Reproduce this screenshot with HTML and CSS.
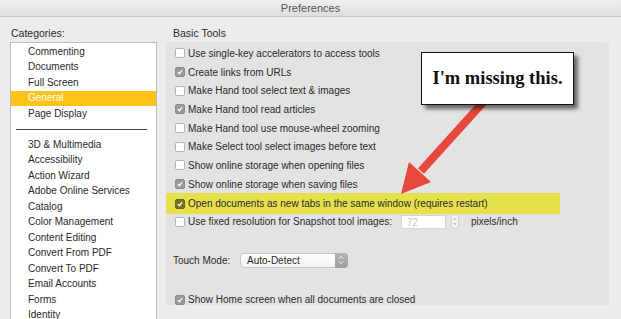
FILE: index.html
```html
<!DOCTYPE html>
<html lang="en">

<head>
    <meta charset="UTF-8">
    <title>Preferences</title>
    <link rel="stylesheet" href="styles.css">
</head>

<body>
    <div class="titlebar">Preferences</div>
    <div class="main">
        <div class="sidebar">
            <div class="heading">Categories:</div>
            <ul class="list">
                <li>Commenting</li>
                <li>Documents</li>
                <li>Full Screen</li>
                <li class="selected">General</li>
                <li>Page Display</li>
                <li class="sep"></li>
                <li>3D &amp; Multimedia</li>
                <li>Accessibility</li>
                <li>Action Wizard</li>
                <li>Adobe Online Services</li>
                <li>Catalog</li>
                <li>Color Management</li>
                <li>Content Editing</li>
                <li>Convert From PDF</li>
                <li>Convert To PDF</li>
                <li>Email Accounts</li>
                <li>Forms</li>
                <li>Identity</li>
            </ul>
        </div>
        <div class="content">
            <div class="heading basic">Basic Tools</div>
            <div class="panel">
                <div class="row"><span class="cb"></span>Use single-key accelerators to access tools</div>
                <div class="row"><span class="cb on"><svg viewBox="0 0 10 10"><path d="M2.4 5.2 L4.3 7.2 L7.6 2.6"/></svg></span>Create links from URLs</div>
                <div class="row"><span class="cb"></span>Make Hand tool select text &amp; images</div>
                <div class="row"><span class="cb on"><svg viewBox="0 0 10 10"><path d="M2.4 5.2 L4.3 7.2 L7.6 2.6"/></svg></span>Make Hand tool read articles</div>
                <div class="row"><span class="cb"></span>Make Hand tool use mouse-wheel zooming</div>
                <div class="row"><span class="cb"></span>Make Select tool select images before text</div>
                <div class="row"><span class="cb"></span>Show online storage when opening files</div>
                <div class="row"><span class="cb on"><svg viewBox="0 0 10 10"><path d="M2.4 5.2 L4.3 7.2 L7.6 2.6"/></svg></span>Show online storage when saving files</div>
                <div class="row marked"><span class="cb on"><svg viewBox="0 0 10 10"><path d="M2.4 5.2 L4.3 7.2 L7.6 2.6"/></svg></span>Open documents as new tabs in the same window (requires restart)</div>
                <div class="row"><span class="cb"></span><span class="fixed-label">Use fixed resolution for Snapshot tool images:</span><span class="num">72</span><span class="stepper"><svg viewBox="0 0 8 15"><path d="M2.2 5.5 L4 3.5 L5.8 5.5 M2.2 9.5 L4 11.5 L5.8 9.5"/></svg></span><span class="unit">pixels/inch</span></div>
                <div class="row touch"><span class="touch-label">Touch Mode:</span><span class="popup">Auto-Detect<span class="popbtn"><svg viewBox="0 0 12 14"><path d="M3.8 5.6 L6 3.4 L8.2 5.6 M3.8 8.4 L6 10.6 L8.2 8.4"/></svg></span></span></div>
                <div class="row home"><span class="cb on"><svg viewBox="0 0 10 10"><path d="M2.4 5.2 L4.3 7.2 L7.6 2.6"/></svg></span>Show Home screen when all documents are closed</div>
            </div>
        </div>
    </div>

    <!-- annotation -->
    <svg class="arrow" width="621" height="319" viewBox="0 0 621 319">
        <line x1="487" y1="98" x2="421" y2="171" />
        <polygon points="401,194 431,182 409,162" />
    </svg>
    <div class="callout">I'm missing this.</div>
</body>

</html>
```

FILE: styles.css
```css
body {
    margin: 0;
    width: 621px;
    height: 319px;
    overflow: hidden;
    position: relative;
    background-color: #ececec;
    font-family: 'Liberation Sans', Arial, sans-serif;
    font-size: 10px;
    color: #2a2a2a;
}

.titlebar {
    height: 16px;
    line-height: 16px;
    text-align: center;
    font-size: 11px;
    color: #555;
    background: linear-gradient(#efefef, #dedede);
    border-bottom: 1px solid #c4c4c4;
}

.main {
    display: flex;
    gap: 9px;
    padding: 10px 0 0 10px;
}

.heading {
    height: 12px;
    line-height: 12px;
    margin-bottom: 3px;
    font-size: 10.5px;
    padding-left: 1px;
}

.heading.basic {
    padding-left: 7px;
}

/* category list */
.sidebar {
    width: 147px;
}

.list {
    list-style: none;
    margin: 0;
    padding: 1px 0 0;
    height: 275px;
    overflow: hidden;
    background-color: white;
    border: 1px solid #bcbcbc;
    border-bottom: none;
}

.list li {
    box-sizing: border-box;
    height: 15.5px;
    line-height: 10px;
    padding: 2.75px 0 0 17px;
}

.list li.selected {
    background-color: #fbc417;
    color: white;
}

.list li.sep {
    position: relative;
}

.list li.sep::after {
    content: '';
    position: absolute;
    left: 5px;
    right: 9px;
    top: 7px;
    border-top: 1px solid #444;
}

/* basic tools panel */
.content {
    width: 443px;
}

.panel {
    box-sizing: border-box;
    height: 263px;
    padding-top: 2px;
    background-color: #e3e3e3;
    border-radius: 2px;
}

.row {
    display: flex;
    align-items: center;
    height: 18.7px;
    padding-left: 9px;
    white-space: nowrap;
}

.row.marked {
    width: 394px;
    height: 20.7px;
    box-sizing: border-box;
    margin: -0.5px 0 -1.5px;
    padding-top: 0.5px;
    background-color: #e6e14b;
}

.cb {
    box-sizing: border-box;
    width: 10px;
    height: 10px;
    margin-right: 3px;
    background-color: white;
    border: 1px solid #b5b5b5;
    border-radius: 2px;
    flex-shrink: 0;
}

.cb.on {
    background-color: #9a9a9a;
    border-color: #8c8c8c;
}

.row.marked .cb.on {
    background-color: #77721f;
    border-color: #6b661c;
}

.cb svg {
    display: block;
    width: 8px;
    height: 8px;
}

.cb svg path {
    fill: none;
    stroke: white;
    stroke-width: 1.6;
}

.fixed-label {
    width: 213px;
}

.num {
    box-sizing: border-box;
    width: 45px;
    height: 14px;
    line-height: 13px;
    padding-left: 5px;
    color: #c4c4c4;
    background-color: white;
    border: 1px solid #d6d6d6;
}

.stepper {
    width: 8px;
    height: 15px;
    margin-left: 5px;
    background-color: #f4f4f4;
    border: 1px solid #d2d2d2;
    border-radius: 4px;
    box-sizing: border-box;
}

.stepper svg {
    display: block;
    width: 6px;
    height: 13px;
}

.stepper svg path,
.popbtn svg path {
    fill: none;
    stroke: #8a8a8a;
    stroke-width: 1;
}

.unit {
    margin-left: 12px;
}

.row.touch {
    margin-top: 20px;
    padding-left: 7px;
}

.touch-label {
    width: 67px;
}

.popup {
    position: relative;
    box-sizing: border-box;
    display: flex;
    align-items: center;
    width: 108px;
    height: 15px;
    padding-left: 6px;
    background: linear-gradient(#ffffff, #f3f3f3);
    border: 1px solid #c6c6c6;
    border-radius: 4px;
}

.popbtn {
    position: absolute;
    right: -1px;
    top: -1px;
    width: 13px;
    height: 15px;
    background: linear-gradient(#b4b4b4, #9d9d9d);
    border-radius: 0 4px 4px 0;
}

.popbtn svg {
    display: block;
    width: 12px;
    height: 14px;
}

.popbtn svg path {
    stroke: white;
}

.row.home {
    margin-top: 21px;
}

/* annotation over the screenshot */
.arrow {
    position: absolute;
    left: 0;
    top: 0;
}

.arrow line {
    stroke: #e8473d;
    stroke-width: 8;
}

.arrow polygon {
    fill: #e8473d;
}

.callout {
    position: absolute;
    left: 421px;
    top: 52px;
    width: 153px;
    height: 53px;
    box-sizing: border-box;
    border: 1px solid #111;
    background-color: white;
    box-shadow: 4px 4px 4px rgba(0, 0, 0, 0.55);
    font-family: 'Liberation Serif', 'Times New Roman', serif;
    font-weight: bold;
    font-size: 18.5px;
    color: #111;
    display: flex;
    align-items: center;
    justify-content: center;
}
```
